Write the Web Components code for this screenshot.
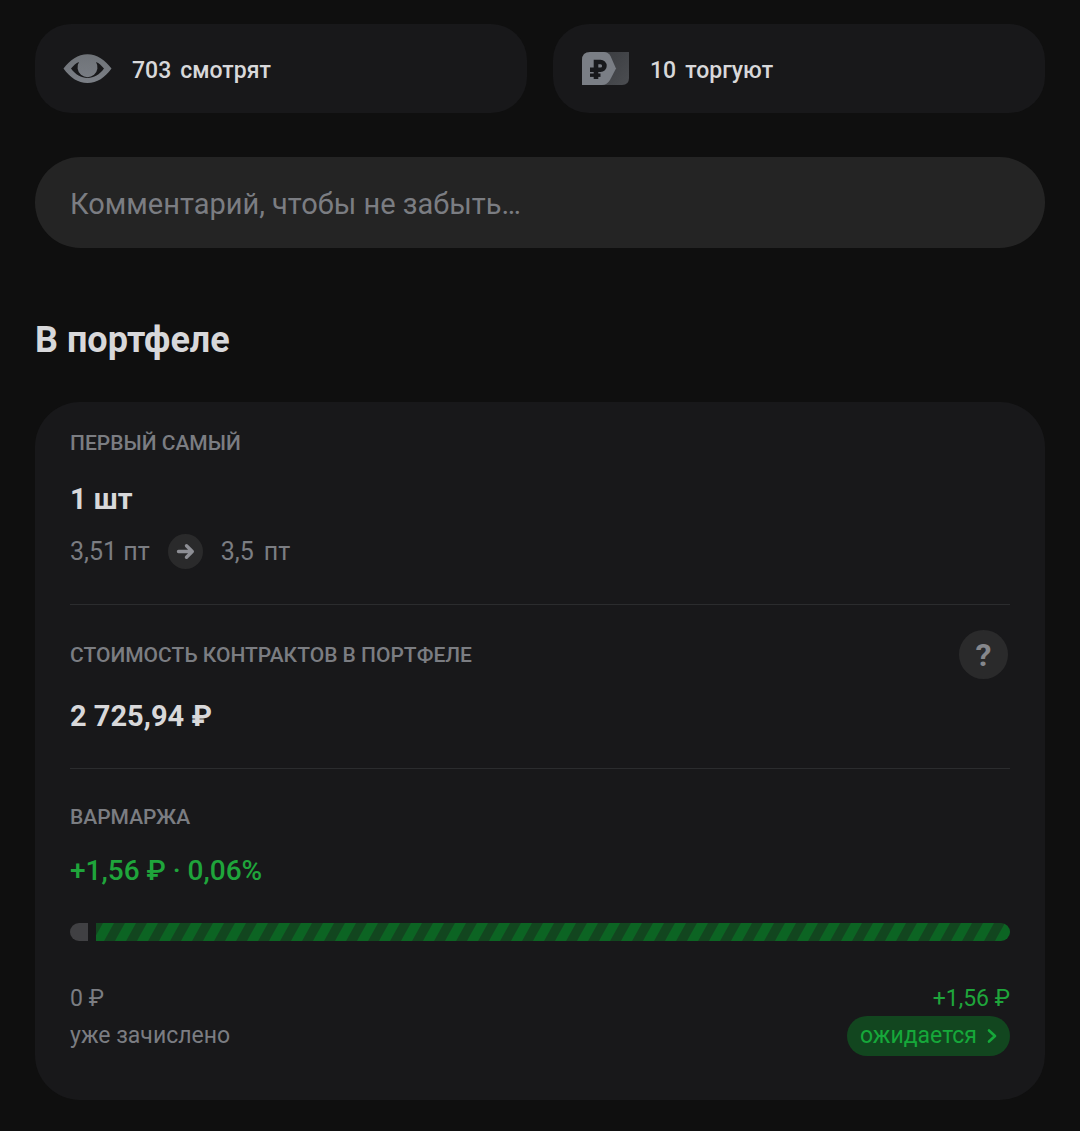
<!DOCTYPE html>
<html lang="ru">
  <head>
    <meta charset="UTF-8" />
    <meta name="viewport" content="width=device-width, initial-scale=1.0" />
    <title>В портфеле</title>

    <style>
      body {
        margin: 0;
        background-color: #0f0f0f;
        color: #d8d8da;
        font-family: Roboto, "Liberation Sans", sans-serif;
        --card: #18181a;
        --muted: #7b7d82;
        --line: #2b2c2e;
        --green: #1fa53b;
      }
    </style>
  </head>
  <body>
    <template id="stat-chip">
      <style>
        :host {
          display: flex;
          flex: 1;
          align-items: center;
          gap: 20px;
          height: 89px;
          box-sizing: border-box;
          padding: 0 28px;
          border-radius: 36px;
          background-color: var(--card);
          font-size: 23px;
          font-weight: 500;
          line-height: 28px;
        }
        ::slotted(svg) {
          display: block;
          width: 49px;
          height: 36px;
        }
        p {
          display: flex;
          gap: 9px;
          margin: 0;
          padding-top: 4px;
        }
      </style>
      <slot name="icon"></slot>
      <p><slot name="count"></slot><slot></slot></p>
    </template>

    <template id="comment-field">
      <style>
        :host {
          display: block;
        }
        input {
          display: block;
          width: 100%;
          height: 91px;
          box-sizing: border-box;
          padding: 3px 35px 0;
          border: 0;
          border-radius: 46px;
          outline: 0;
          background-color: #242424;
          color: #d8d8da;
          font: 400 29px / 36px Roboto, "Liberation Sans", sans-serif;
        }
        input::placeholder {
          color: var(--muted);
          opacity: 1;
        }
      </style>
      <input type="text" />
    </template>

    <template id="card-section">
      <style>
        :host {
          display: flex;
          flex-direction: column;
          padding: var(--space, 29px 0 35px);
          border-bottom: 1px solid var(--line);
        }
        :host(:last-of-type) {
          border-bottom: 0;
        }
        header {
          display: flex;
          align-items: center;
          justify-content: space-between;
        }
        h3 {
          margin: 0;
          color: var(--muted);
          font-size: 21px;
          font-weight: 500;
          line-height: 24px;
          text-transform: uppercase;
        }
        .value {
          margin: var(--value-gap, 24px) 0 0;
          font-size: 29px;
          font-weight: 700;
          line-height: 36px;
        }
        :host([tone="up"]) .value {
          color: var(--green);
          font-size: 28px;
          font-weight: 500;
        }
      </style>
      <header>
        <h3><slot name="label"></slot></h3>
        <slot name="action"></slot>
      </header>
      <p class="value"><slot name="value"></slot></p>
      <slot></slot>
    </template>

    <template id="help-button">
      <style>
        :host {
          display: block;
          margin-right: 2px;
        }
        button {
          display: grid;
          place-items: center;
          width: 49px;
          height: 49px;
          padding: 0;
          border: 0;
          border-radius: 50%;
          background-color: #2a2a2b;
          color: #85878c;
          font: 700 32px / 36px Roboto, "Liberation Sans", sans-serif;
        }
      </style>
      <button type="button" aria-label="Подсказка">?</button>
    </template>

    <template id="price-move">
      <style>
        :host {
          display: flex;
          align-items: center;
          gap: 18px;
          margin-top: 17px;
          color: var(--muted);
          font-size: 25px;
          line-height: 28px;
        }
        svg {
          display: block;
          width: 35px;
          height: 35px;
        }
        .to {
          display: flex;
          gap: 10px;
        }
      </style>
      <slot name="from"></slot>
      <svg viewBox="0 0 35 35" aria-hidden="true">
        <circle cx="17.5" cy="17.5" r="17.5" fill="#2a2a2b" />
        <path
          d="M10.5 17.5H24M18.5 11.8L24.3 17.5L18.5 23.2"
          fill="none"
          stroke="#8d8e94"
          stroke-width="3.4"
          stroke-linecap="round"
          stroke-linejoin="round"
        />
      </svg>
      <span class="to"><slot name="to"></slot><slot name="unit"></slot></span>
    </template>

    <template id="margin-bar">
      <style>
        :host {
          display: flex;
          gap: 8px;
          height: 18px;
          margin-top: 34px;
        }
        .done {
          width: 18px;
          border-radius: 9px 0 0 9px;
          background-color: #404043;
        }
        .pending {
          flex: 1;
          height: 18px;
          border-radius: 0 9px 9px 0;
        }
      </style>
      <div class="done"></div>
      <svg class="pending" aria-hidden="true">
        <defs>
          <pattern id="stripes" width="22" height="18" patternUnits="userSpaceOnUse">
            <rect width="22" height="18" fill="#12461f" />
            <path d="M-3 18L7 0H18L8 18ZM19 18L29 0H40L30 18Z" fill="#0c6423" />
          </pattern>
        </defs>
        <rect width="100%" height="18" fill="url(#stripes)" />
      </svg>
    </template>

    <template id="margin-legend">
      <style>
        :host {
          display: flex;
          justify-content: space-between;
          margin-top: 44px;
          color: var(--muted);
          font-size: 23px;
          line-height: 28px;
        }
        div {
          display: flex;
          flex-direction: column;
          gap: 3px;
        }
        .pending {
          align-items: flex-end;
          color: var(--green);
        }
        .note {
          line-height: 40px;
        }
        button {
          display: flex;
          align-items: center;
          gap: 9px;
          height: 40px;
          padding: 0 12px 0 13px;
          border: 0;
          border-radius: 20px;
          background-color: #12461f;
          color: #16a83a;
          font: 400 23px / 28px Roboto, "Liberation Sans", sans-serif;
        }
      </style>
      <div>
        <slot name="done"></slot>
        <span class="note"><slot name="done-note"></slot></span>
      </div>
      <div class="pending">
        <slot name="pending"></slot>
        <button type="button">
          <slot name="pending-note"></slot>
          <svg width="12" height="16" viewBox="0 0 12 16" aria-hidden="true">
            <path
              d="M3 2.5L9 8L3 13.5"
              fill="none"
              stroke="currentColor"
              stroke-width="2.6"
              stroke-linecap="round"
              stroke-linejoin="round"
            />
          </svg>
        </button>
      </div>
    </template>

    <template id="portfolio-page">
      <style>
        :host {
          display: block;
          padding: 24px 35px 31px;
        }
        .stats {
          display: flex;
          gap: 26px;
          margin-bottom: 44px;
        }
        h2 {
          margin: 70px 0 40px;
          font-size: 36px;
          font-weight: 700;
          line-height: 44px;
        }
        .card {
          padding: 0 35px 10px;
          border-radius: 45px;
          background-color: var(--card);
        }
      </style>
      <div class="stats"><slot name="stats"></slot></div>
      <slot name="comment"></slot>
      <h2><slot name="title"></slot></h2>
      <div class="card"><slot></slot></div>
    </template>

    <portfolio-page>
      <stat-chip slot="stats">
        <svg slot="icon" viewBox="0 0 49 36" aria-hidden="true">
          <defs>
            <linearGradient id="eye" x1="0" y1="0" x2="0" y2="1">
              <stop offset="0" stop-color="#6f7378" />
              <stop offset="1" stop-color="#7b7f86" />
            </linearGradient>
          </defs>
          <path
            d="M.5 17.5C7 9 15 3.2 24.5 3.2S42 9 48.5 17.5C42 26.5 34 32 24.5 32S7 26.5 .5 17.5ZM8 17.5C12.5 23.5 18 27 24.5 27S36.5 23.5 41 17.5C38.5 14.5 36 12.2 33 11A10 10 0 1 1 16 11C13 12.2 10.5 14.5 8 17.5Z"
            fill="url(#eye)"
            fill-rule="evenodd"
          />
        </svg>
        <span slot="count">703</span>
        <span>смотрят</span>
      </stat-chip>

      <stat-chip slot="stats">
        <svg slot="icon" viewBox="0 0 49 36" aria-hidden="true">
          <defs>
            <linearGradient id="tail" x1="0" y1="0" x2="1" y2="1">
              <stop offset="0" stop-color="#3a3c40" />
              <stop offset="1" stop-color="#4b4d51" />
            </linearGradient>
          </defs>
          <path d="M20 1H48V27Q48 34 41 34H20Z" fill="url(#tail)" />
          <path d="M1 34V9Q1 1 9 1H23Q27 1 29.5 5L35 17.5L29 29Q26 34 21 34Z" fill="#7a7e85" />
          <path
            d="M15 28V11H19.5A3.9 3.9 0 0 1 19.5 18.8H9"
            fill="none"
            stroke="#18191c"
            stroke-width="4.6"
          />
          <path d="M9 24.2H19.5" stroke="#18191c" stroke-width="3.4" />
        </svg>
        <span slot="count">10</span>
        <span>торгуют</span>
      </stat-chip>

      <comment-field slot="comment" placeholder="Комментарий, чтобы не забыть…"></comment-field>

      <span slot="title">В портфеле</span>

      <card-section style="--value-gap: 26px">
        <span slot="label">Первый самый</span>
        <span slot="value">1 шт</span>
        <price-move>
          <span slot="from">3,51 пт</span>
          <span slot="to">3,5</span>
          <span slot="unit">пт</span>
        </price-move>
      </card-section>

      <card-section style="--space: 25px 0 34px; --value-gap: 19px">
        <span slot="label">Стоимость контрактов в портфеле</span>
        <help-button slot="action"></help-button>
        <span slot="value">2 725,94 ₽</span>
      </card-section>

      <card-section tone="up" style="--space: 36px 0 34px">
        <span slot="label">Вармаржа</span>
        <span slot="value">+1,56 ₽ · 0,06%</span>
        <margin-bar></margin-bar>
        <margin-legend>
          <span slot="done">0 ₽</span>
          <span slot="done-note">уже зачислено</span>
          <span slot="pending">+1,56 ₽</span>
          <span slot="pending-note">ожидается</span>
        </margin-legend>
      </card-section>
    </portfolio-page>

    <script type="module">
      class TemplateElement extends HTMLElement {
        constructor() {
          super();
          const tmp = document.getElementById(this.localName);
          this.attachShadow({ mode: "open" });
          this.shadowRoot.appendChild(tmp.content.cloneNode(true));
        }
      }

      class CommentField extends TemplateElement {
        connectedCallback() {
          const input = this.shadowRoot.querySelector("input");
          const text = this.getAttribute("placeholder");
          input.placeholder = text;
          input.setAttribute("aria-label", text);
        }
      }

      window.customElements.define("portfolio-page", class extends TemplateElement {});
      window.customElements.define("stat-chip", class extends TemplateElement {});
      window.customElements.define("comment-field", CommentField);
      window.customElements.define("card-section", class extends TemplateElement {});
      window.customElements.define("help-button", class extends TemplateElement {});
      window.customElements.define("price-move", class extends TemplateElement {});
      window.customElements.define("margin-bar", class extends TemplateElement {});
      window.customElements.define("margin-legend", class extends TemplateElement {});
    </script>
  </body>
</html>
